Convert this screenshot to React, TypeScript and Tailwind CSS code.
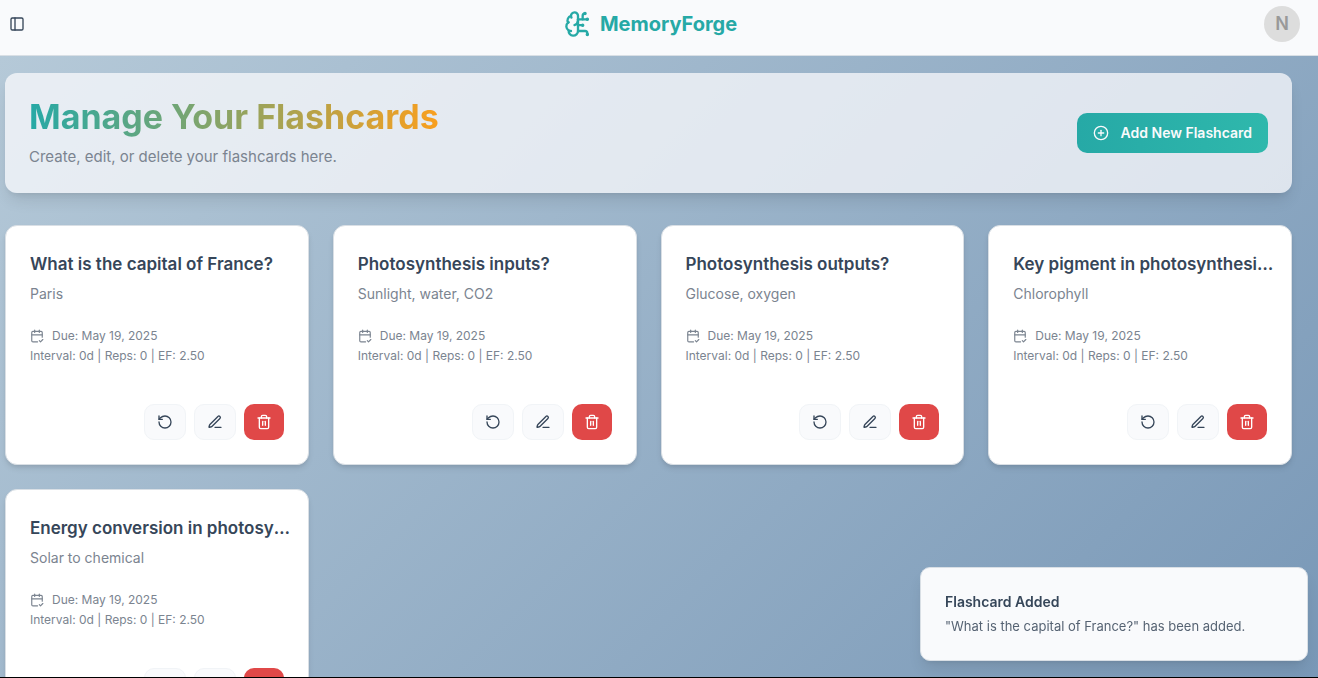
import {
  BrainCircuit,
  CalendarCheck2,
  CirclePlus,
  PanelLeft,
  RotateCcw,
  Trash2,
} from "lucide-react";

type Flashcard = {
  question: string;
  answer: string;
  due: string;
  interval: number;
  reps: number;
  ease: string;
};

const schedule = { due: "May 19, 2025", interval: 0, reps: 0, ease: "2.50" };

const flashcards: Flashcard[] = [
  { question: "What is the capital of France?", answer: "Paris", ...schedule },
  { question: "Photosynthesis inputs?", answer: "Sunlight, water, CO2", ...schedule },
  { question: "Photosynthesis outputs?", answer: "Glucose, oxygen", ...schedule },
  { question: "Key pigment in photosynthesis?", answer: "Chlorophyll", ...schedule },
  { question: "Energy conversion in photosynthesis?", answer: "Solar to chemical", ...schedule },
];

function Header() {
  return (
    <header className="flex h-14 shrink-0 items-center justify-between border-b border-[#d9dfe5] bg-[#f9fafc] pr-[18px] pb-2 pl-[9px]">
      <button type="button" aria-label="Toggle sidebar" className="flex w-7 text-[#364659]">
        <PanelLeft size={16} />
      </button>
      <a href="#" className="flex items-center gap-2 text-[#26a9a6]">
        <BrainCircuit size={28} />
        <span className="text-xl leading-7 font-bold">MemoryForge</span>
      </a>
      <button
        type="button"
        aria-label="Account"
        className="flex size-9 items-center justify-center rounded-full bg-[#dddddd] text-lg font-semibold text-[#999999]"
      >
        N
      </button>
    </header>
  );
}

function Banner() {
  return (
    <section className="flex items-center justify-between rounded-xl bg-[#f9fafc]/75 p-6 shadow-lg">
      <div>
        <h1 className="w-fit bg-linear-to-r/srgb from-[#26a9a6] to-[#f99f1e] bg-clip-text text-[34px] leading-10 font-bold text-transparent">
          Manage Your Flashcards
        </h1>
        <p className="mt-2 text-[15px] leading-6 text-[#7b8490]">
          Create, edit, or delete your flashcards here.
        </p>
      </div>
      <button
        type="button"
        className="flex h-10 items-center gap-3 rounded-[10px] bg-linear-to-r/srgb from-[#26a9a6] to-[#2fb8ac] px-4 text-sm font-semibold text-[#f9fafc]"
      >
        <CirclePlus size={16} />
        Add New Flashcard
      </button>
    </section>
  );
}

function PenIcon() {
  return (
    <svg
      width="16"
      height="16"
      viewBox="0 0 24 24"
      fill="none"
      stroke="currentColor"
      strokeWidth="2"
      strokeLinecap="round"
      strokeLinejoin="round"
      aria-hidden="true"
    >
      <path d="M12 20h9" />
      <path d="M16.376 3.622a1 1 0 0 1 3.002 3.002L7.368 18.635a2 2 0 0 1-.855.506l-2.872.838a.5.5 0 0 1-.62-.62l.838-2.872a2 2 0 0 1 .506-.854z" />
    </svg>
  );
}

function FlashcardTile({ card }: { card: Flashcard }) {
  return (
    <article className="flex h-60 min-w-0 flex-col justify-between rounded-xl border border-[#d9dfe5] bg-white p-6 shadow-md">
      <div>
        <h2 className="-mr-2 truncate text-[17px] leading-7 font-semibold text-[#364659]">{card.question}</h2>
        <p className="mt-1 text-sm leading-6 text-[#7b8490]">{card.answer}</p>
        <div className="mt-5 text-xs leading-5 text-[#7b8490]">
          <p className="flex items-center gap-2">
            <CalendarCheck2 size={14} />
            Due: {card.due}
          </p>
          <p>
            Interval: {card.interval}d | Reps: {card.reps} | EF: {card.ease}
          </p>
        </div>
      </div>
      <div className="flex justify-end gap-2">
        <button
          type="button"
          aria-label="Reset progress"
          className="flex h-9 w-[42px] items-center justify-center rounded-[10px] border border-[#f1f4f7] bg-[#f9fafc] text-[#364659]"
        >
          <RotateCcw size={16} />
        </button>
        <button
          type="button"
          aria-label="Edit flashcard"
          className="flex h-9 w-[42px] items-center justify-center rounded-[10px] border border-[#f1f4f7] bg-[#f9fafc] text-[#364659]"
        >
          <PenIcon />
        </button>
        <button
          type="button"
          aria-label="Delete flashcard"
          className="flex h-9 w-10 items-center justify-center rounded-[10px] bg-[#e04848] text-white"
        >
          <Trash2 size={16} />
        </button>
      </div>
    </article>
  );
}

function Toast() {
  return (
    <div
      role="status"
      className="fixed right-[10px] bottom-[17px] w-[388px] rounded-[10px] border border-[#d9dfe5] bg-[#f9fafc] p-6 text-[#364659] shadow-lg"
    >
      <p className="text-sm leading-5 font-semibold">Flashcard Added</p>
      <p className="mt-1 text-[13px] leading-5 text-[#566373]">
        "What is the capital of France?" has been added.
      </p>
    </div>
  );
}

export default function App() {
  return (
    <div className="flex h-screen flex-col overflow-hidden border-b border-black font-['Inter',sans-serif]">
      <Header />
      <main className="min-h-0 flex-1 overflow-hidden bg-linear-135/srgb from-[#b5c9d8] to-[#7998b7] pt-[17px] pr-[26px] pl-[5px]">
        <Banner />
        <div className="mt-8 grid grid-cols-4 gap-6">
          {flashcards.map((card) => (
            <FlashcardTile key={card.question} card={card} />
          ))}
        </div>
      </main>
      <Toast />
    </div>
  );
}
